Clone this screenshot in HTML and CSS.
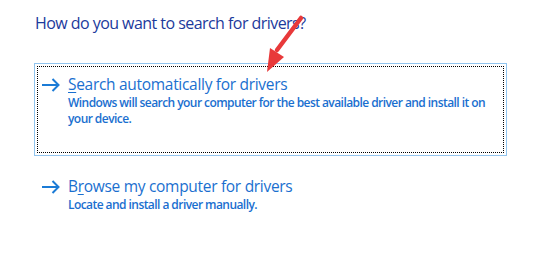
FILE: index.html
```html
<!DOCTYPE html>
<html>
<head>
<meta charset="utf-8">
<link rel="stylesheet" href="styles.css">
</head>
<body>
<div class="page">
  <h1 class="title">How do you want to search for drivers?</h1>
  <div class="option focused">
    <div class="focus-ring">
      <span class="arrow"><svg width="18" height="14" viewBox="0 0 18 14"><path d="M0 7H16.5M10.5 1L16.5 7L10.5 13" fill="none" stroke="#1b7bd6" stroke-width="2"/></svg></span>
      <div class="text">
        <div class="opt-title"><u>S</u>earch automatically for drivers</div>
        <div class="opt-desc">Windows will search your computer for the best available driver and install it on<br>your device.</div>
      </div>
    </div>
  </div>
  <div class="option">
    <div class="focus-ring">
      <span class="arrow"><svg width="18" height="14" viewBox="0 0 18 14"><path d="M0 7H16.5M10.5 1L16.5 7L10.5 13" fill="none" stroke="#1b7bd6" stroke-width="2"/></svg></span>
      <div class="text">
        <div class="opt-title">B<u>r</u>owse my computer for drivers</div>
        <div class="opt-desc">Locate and install a driver manually.</div>
      </div>
    </div>
  </div>
  <svg class="pointer" width="60" height="70" viewBox="0 0 60 70">
    <path d="M47 8L23 40" stroke="#e8393a" stroke-width="4.5" stroke-linecap="round" fill="none"/>
    <path d="M16 38L30 47L13 62Z" fill="#e8393a"/>
  </svg>
</div>
</body>
</html>
```
FILE: styles.css
```css
html, body {
  margin: 0;
  padding: 0;
  background: #ffffff;
}
.page {
  position: relative;
  width: 543px;
  height: 263px;
  padding: 12px 0 0 34px;
  box-sizing: border-box;
  font-family: "Open Sans", "Noto Sans", sans-serif;
}
.title {
  margin: 0 0 29px 1px;
  font-size: 16px;
  font-weight: 400;
  line-height: 22px;
  color: #1c3a9c;
  letter-spacing: -0.55px;
  white-space: nowrap;
}
.option {
  width: 473px;
  height: 93px;
  box-sizing: border-box;
  border: 1px solid transparent;
  padding: 2px;
  margin-bottom: 9px;
}
.option.focused {
  border-color: #91c4ee;
}
.focus-ring {
  height: 100%;
  box-sizing: border-box;
  border: 1px dotted transparent;
  display: flex;
  align-items: flex-start;
  padding: 7px 0 0 4px;
}
.focused .focus-ring {
  border-color: #000000;
}
.arrow {
  width: 18px;
  height: 14px;
  margin-top: 4px;
  margin-right: 8px;
  display: block;
}
.arrow svg {
  display: block;
}
.text {
  display: flex;
  flex-direction: column;
}
.opt-title {
  font-size: 15.5px;
  line-height: 21px;
  color: #1a6fcf;
  letter-spacing: -0.3px;
  white-space: nowrap;
}
.opt-title u {
  text-decoration-thickness: 1px;
  text-underline-offset: 2px;
}
.opt-desc {
  font-size: 12px;
  font-weight: 600;
  line-height: 16px;
  color: #1a6fcf;
  letter-spacing: -0.56px;
  white-space: nowrap;
}
.pointer {
  position: absolute;
  left: 254px;
  top: 10px;
}
```
